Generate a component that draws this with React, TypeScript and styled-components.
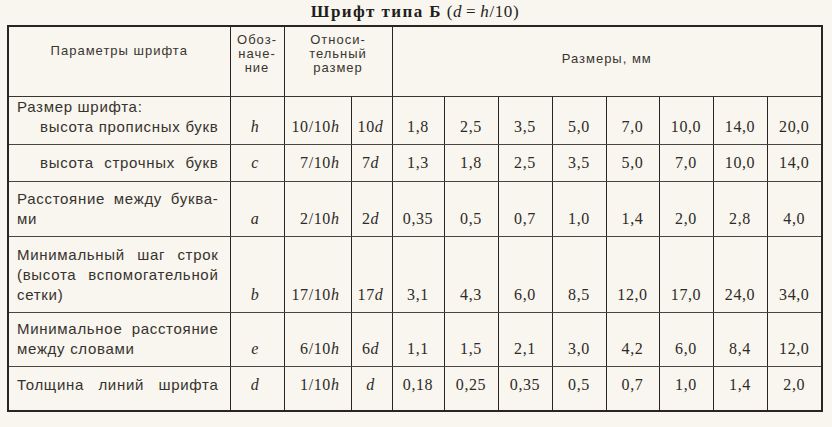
import React from "react";
import styled, { createGlobalStyle } from "styled-components";

const GlobalStyle = createGlobalStyle`
  html, body {
    margin: 0;
    padding: 0;
    background: #f8f6ef;
  }
`;

type Line = { text: string; indent?: boolean; justify?: boolean };

type Row = {
  lines: Line[];
  sym: string;
  rel: string;
  mult: string;
  values: string[];
  height: number;
  valign: "top" | "bottom";
};

const rows: Row[] = [
  {
    lines: [
      { text: "Размер шрифта:" },
      { text: "высота прописных букв", indent: true, justify: true },
    ],
    sym: "h",
    rel: "10",
    mult: "10",
    values: ["1,8", "2,5", "3,5", "5,0", "7,0", "10,0", "14,0", "20,0"],
    height: 48,
    valign: "bottom",
  },
  {
    lines: [{ text: "высота строчных букв", indent: true, justify: true }],
    sym: "c",
    rel: "7",
    mult: "7",
    values: ["1,3", "1,8", "2,5", "3,5", "5,0", "7,0", "10,0", "14,0"],
    height: 37,
    valign: "top",
  },
  {
    lines: [
      { text: "Расстояние между буква-", justify: true },
      { text: "ми" },
    ],
    sym: "a",
    rel: "2",
    mult: "2",
    values: ["0,35", "0,5", "0,7", "1,0", "1,4", "2,0", "2,8", "4,0"],
    height: 55,
    valign: "bottom",
  },
  {
    lines: [
      { text: "Минимальный шаг строк", justify: true },
      { text: "(высота вспомогательной", justify: true },
      { text: "сетки)" },
    ],
    sym: "b",
    rel: "17",
    mult: "17",
    values: ["3,1", "4,3", "6,0", "8,5", "12,0", "17,0", "24,0", "34,0"],
    height: 76,
    valign: "bottom",
  },
  {
    lines: [
      { text: "Минимальное расстояние", justify: true },
      { text: "между словами" },
    ],
    sym: "e",
    rel: "6",
    mult: "6",
    values: ["1,1", "1,5", "2,1", "3,0", "4,2", "6,0", "8,4", "12,0"],
    height: 54,
    valign: "bottom",
  },
  {
    lines: [{ text: "Толщина линий шрифта", justify: true }],
    sym: "d",
    rel: "1",
    mult: "",
    values: ["0,18", "0,25", "0,35", "0,5", "0,7", "1,0", "1,4", "2,0"],
    height: 45,
    valign: "top",
  },
];

const colWidths = [222, 54, 67, 41, 52, 54, 54, 54, 53, 54, 54, 55];

export default function App() {
  return (
    <>
      <GlobalStyle />
      <Sheet>
        <Caption>
          <b>Шрифт типа Б</b> (<i>d</i>&thinsp;=&thinsp;<i>h</i>/10)
        </Caption>
        <Table>
          <colgroup>
            {colWidths.map((w, i) => (
              <col key={i} style={{ width: w }} />
            ))}
          </colgroup>
          <thead>
            <HeadRow>
              <HeadCell $padTop={17}>Параметры шрифта</HeadCell>
              <HeadCell $padTop={6}>
                Обоз-
                <br />
                наче-
                <br />
                ние
              </HeadCell>
              <HeadCell colSpan={2} $padTop={6}>
                Относи-
                <br />
                тельный
                <br />
                размер
              </HeadCell>
              <HeadCell colSpan={8} $padTop={25}>
                Размеры, мм
              </HeadCell>
            </HeadRow>
          </thead>
          <tbody>
            {rows.map((r, i) => (
              <BodyRow key={i} $height={r.height}>
                <ParamCell $valign={r.valign}>
                  {r.lines.map((l, j) => (
                    <ParamLine key={j} $indent={l.indent} $justify={l.justify}>
                      {l.text}
                    </ParamLine>
                  ))}
                </ParamCell>
                <SymCell $valign={r.valign}>{r.sym}</SymCell>
                <RelCell $valign={r.valign}>
                  {r.rel}/10<i>h</i>
                </RelCell>
                <MultCell $valign={r.valign}>
                  {r.mult}
                  <i>d</i>
                </MultCell>
                {r.values.map((v, k) => (
                  <NumCell key={k} $valign={r.valign}>
                    {v}
                  </NumCell>
                ))}
              </BodyRow>
            ))}
          </tbody>
        </Table>
      </Sheet>
    </>
  );
}

const Sheet = styled.div`
  width: 832px;
  height: 427px;
  padding: 0 0 0 7px;
  box-sizing: border-box;
  background: #f8f6ef;
  color: #35302c;
`;

const Caption = styled.div`
  height: 25px;
  width: 816px;
  text-align: center;
  font-family: "Liberation Serif", serif;
  font-size: 17px;
  line-height: 24px;
  letter-spacing: 0.6px;
  color: #221e1b;

  b {
    letter-spacing: 1.4px;
  }
`;

const Table = styled.table`
  width: 816px;
  border-collapse: collapse;
  table-layout: fixed;
  border: 2px solid #2a2522;
`;

const HeadRow = styled.tr`
  height: 70px;
`;

const HeadCell = styled.th<{ $padTop: number }>`
  padding: ${(p) => p.$padTop}px 2px 0;
  vertical-align: top;
  border-left: 1px solid #2a2522;
  border-bottom: 1px solid #3a3531;
  font-family: "Liberation Sans", sans-serif;
  font-weight: 400;
  font-size: 13px;
  line-height: 14px;
  letter-spacing: 1px;
  text-align: center;
  color: #3a3531;
`;

const BodyRow = styled.tr<{ $height: number }>`
  height: ${(p) => p.$height}px;
`;

const BaseCell = styled.td<{ $valign: "top" | "bottom" }>`
  vertical-align: ${(p) => p.$valign};
  padding: ${(p) => (p.$valign === "top" ? "8px 4px 0" : "0 4px 7px")};
  border-left: 1px solid #2a2522;
  border-bottom: 1px solid #4a4540;
  line-height: 20px;
  white-space: nowrap;
`;

const ParamCell = styled(BaseCell)`
  padding-left: 8px;
  padding-right: 11px;
  font-family: "Liberation Sans", sans-serif;
  font-size: 15px;
  letter-spacing: 0.7px;
  color: #37322e;
`;

const ParamLine = styled.div<{ $indent?: boolean; $justify?: boolean }>`
  padding-left: ${(p) => (p.$indent ? "23px" : "0")};
  text-align: ${(p) => (p.$justify ? "justify" : "left")};
  text-align-last: ${(p) => (p.$justify ? "justify" : "left")};
  white-space: normal;
`;

const SerifCell = styled(BaseCell)`
  font-family: "Liberation Serif", serif;
  font-size: 16px;
  letter-spacing: 0.6px;
  color: #2f2a27;
`;

const SymCell = styled(SerifCell)`
  text-align: center;
  font-style: italic;
  padding-right: 8px;
`;

const RelCell = styled(SerifCell)`
  text-align: right;
  padding-right: 11px;
`;

const MultCell = styled(SerifCell)`
  text-align: center;
  padding-right: 6px;
`;

const NumCell = styled(SerifCell)`
  text-align: center;
`;
